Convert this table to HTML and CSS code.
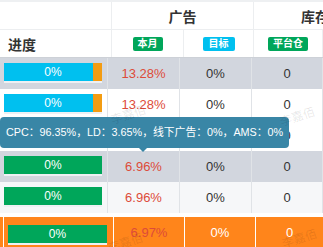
FILE: index.html
```html
<!DOCTYPE html>
<html lang="zh-CN">
<head>
    <meta charset="UTF-8">
    <meta name="viewport" content="width=device-width, initial-scale=1.0">
    <title>广告进度</title>
    <link rel="stylesheet" href="styles.css">
</head>
<body>
    <div class="board">
        <!-- 表头 -->
        <div class="head">
            <div class="hrow top">
                <div class="cell"></div>
                <div class="cell span2">广告</div>
                <div class="cell stock">库存</div>
            </div>
            <div class="hrow">
                <div class="cell title">进度</div>
                <div class="cell"><span class="tag green">本月</span></div>
                <div class="cell"><span class="tag aqua">目标</span></div>
                <div class="cell"><span class="tag green">平台仓</span></div>
            </div>
        </div>

        <!-- 数据行 -->
        <div class="rows">
            <div class="row gray">
                <div class="cell first"><div class="bar"><div class="fill split">0%</div></div></div>
                <div class="cell rate">13.28%</div>
                <div class="cell">0%</div>
                <div class="cell">0</div>
            </div>
            <div class="row">
                <div class="cell first"><div class="bar"><div class="fill split">0%</div></div></div>
                <div class="cell rate">13.28%</div>
                <div class="cell">0%</div>
                <div class="cell">0</div>
            </div>
            <div class="row">
                <div class="cell first"><div class="bar"><div class="fill green">0%</div></div></div>
                <div class="cell rate">6.96%</div>
                <div class="cell">0%</div>
                <div class="cell">0</div>
            </div>
            <div class="row gray">
                <div class="cell first"><div class="bar"><div class="fill green">0%</div></div></div>
                <div class="cell rate">6.96%</div>
                <div class="cell">0%</div>
                <div class="cell">0</div>
            </div>
            <div class="row light">
                <div class="cell first"><div class="bar"><div class="fill green">0%</div></div></div>
                <div class="cell rate">6.96%</div>
                <div class="cell">0%</div>
                <div class="cell">0</div>
            </div>
        </div>

        <!-- 合计 -->
        <div class="total">
            <div class="cell first"><div class="bar"><div class="fill green">0%</div></div></div>
            <div class="cell rate">6.97%</div>
            <div class="cell">0%</div>
            <div class="cell">0</div>
        </div>

        <div class="tip">CPC：96.35%，LD：3.65%，线下广告：0%，AMS：0%</div>

        <span class="mark m1">李嘉佰</span>
        <span class="mark m2">李嘉佰</span>
        <span class="mark m3">李嘉佰</span>
        <span class="mark m4">李嘉佰</span>
    </div>
</body>
</html>
```

FILE: styles.css
```css
body {
    margin: 0;
    font-family: "Liberation Sans", Arial, "Noto Sans CJK SC", sans-serif;
    color: #333;
    background: #fff;
    overflow: hidden;
}
.board {
    position: relative;
    width: 323px;
    height: 247px;
    overflow: hidden;
}
.cell {
    display: flex;
    align-items: center;
    justify-content: center;
    font-size: 13px;
    white-space: nowrap;
    overflow: hidden;
}

/* 表头 */
.head {
    border-top: 2px solid #eef0f2;
}
.hrow {
    display: grid;
    grid-template-columns: 112px 72px 70px 1fr;
    grid-template-rows: 27px;
    height: 27px;
    border-bottom: 1px solid #eceef0;
}
.hrow .cell {
    border-right: 1px solid #eceef0;
}
.hrow.top {
    grid-template-columns: 112px 142px 1fr;
    font-weight: bold;
}
.hrow.top .cell {
    font-size: 14px;
}
.hrow.top .stock {
    justify-content: flex-start;
    padding-left: 47px;
    border-right: none;
}
.hrow:last-child {
    border-bottom: 1px solid #cdd1d7;
}
.title {
    justify-content: flex-start !important;
    padding-left: 8px;
    font-size: 14px !important;
    font-weight: bold;
}
.tag {
    display: inline-block;
    padding: 0 5px;
    height: 14px;
    line-height: 14px;
    border-radius: 2px;
    font-size: 10px;
    font-weight: bold;
    color: #fff;
}
.tag.green { background: #00a65a; }
.tag.aqua { background: #00c0ef; padding: 0 6px; }

/* 数据行 */
.rows {
    margin-left: -4px;
}
.row {
    display: grid;
    grid-template-columns: 112px 72px 72px 1fr;
    grid-template-rows: 31px;
    height: 31px;
    background: #fff;
}
.row.gray { background: #d2d6de; }
.row.light { background: #f6f7f9; }
.row .cell {
    border-right: 1px solid #e0e3e7;
}
.first {
    align-items: flex-start !important;
    justify-content: flex-start !important;
    padding: 5px 0 0 8px;
}
.rate {
    color: #dd4b39;
}
.bar {
    width: 98px;
    height: 20px;
    background: #eef0f3;
}
.fill {
    height: 18px;
    line-height: 18px;
    text-align: center;
    font-size: 12px;
    color: #fff;
}
.fill.split {
    background: linear-gradient(to right, #00c0ef calc(100% - 9px), #f39c12 0);
}
.fill.green {
    background: #00a65a;
}

/* 合计 */
.total {
    display: grid;
    grid-template-columns: 110px 71px 71px 1fr;
    grid-template-rows: 31px;
    height: 31px;
    margin-top: 4px;
    padding-left: 3px;
    background: #ff851b;
    color: #fff;
}
.total .cell {
    border-left: 1px solid #fff;
}
.total .first {
    padding: 8px 0 0 4px;
}
.total .bar {
    width: 99px;
}
.total .rate {
    color: #dd4b39;
}

/* 提示框 */
.tip {
    position: absolute;
    left: 0;
    top: 117px;
    width: 283px;
    height: 31px;
    padding-left: 6px;
    line-height: 31px;
    border-radius: 4px;
    background: #3986a6;
    color: #fff;
    font-size: 10.8px;
    white-space: nowrap;
}
.tip::after {
    content: "";
    position: absolute;
    left: 139px;
    bottom: -4px;
    border-left: 4px solid transparent;
    border-right: 4px solid transparent;
    border-top: 4px solid #3986a6;
}

/* 水印 */
.mark {
    position: absolute;
    font-size: 12px;
    color: rgba(0, 0, 0, 0.1);
    transform: rotate(-18deg);
    pointer-events: none;
}
.m1 { left: 110px; top: 105px; }
.m2 { left: 279px; top: 107px; }
.m3 { left: 107px; top: 233px; }
.m4 { left: 281px; top: 229px; }
```
